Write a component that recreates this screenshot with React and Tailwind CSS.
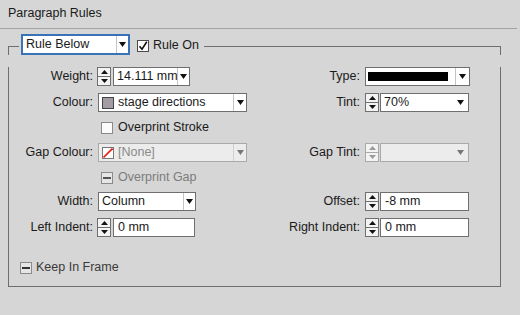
import React from "react";

const Tri = ({ up = false, c = "#111", w = 7, h = 4 }) => (
  <svg width={w} height={h} viewBox={`0 0 ${w} ${h}`} className="block">
    {up ? (
      <path d={`M0 ${h}L${w / 2} 0L${w} ${h}Z`} fill={c} />
    ) : (
      <path d={`M0 0L${w} 0L${w / 2} ${h}Z`} fill={c} />
    )}
  </svg>
);

function Spinner({ disabled = false }) {
  const b = disabled ? "border-[#a9a9a9]" : "border-[#6f6f6f]";
  const c = disabled ? "#9a9a9a" : "#111";
  return (
    <div className={`flex flex-col w-[14px] h-[19px] border ${b} bg-[#f3f3f3] shrink-0`}>
      <div className={`flex-1 flex items-center justify-center border-b ${b}`}>
        <Tri up c={c} w={7} h={4} />
      </div>
      <div className="flex-1 flex items-center justify-center">
        <Tri c={c} w={7} h={4} />
      </div>
    </div>
  );
}

function Combo({ w, children, divider = true, disabled = false, arrowW = 12 }) {
  const border = disabled ? "border-[#a9a9a9]" : "border-[#6f6f6f]";
  const bg = disabled ? "bg-[#ececec]" : "bg-white";
  return (
    <div className={`flex h-[19px] border ${border} ${bg} shrink-0`} style={{ width: w }}>
      <div className="flex-1 flex items-center overflow-hidden pl-[3px] whitespace-nowrap">{children}</div>
      <div
        className={`flex items-center justify-center shrink-0 ${divider ? (disabled ? "border-l border-[#cfcfcf]" : "border-l border-[#c4c4c4]") : ""}`}
        style={{ width: arrowW }}
      >
        <Tri c={disabled ? "#777" : "#111"} w={7} h={5} />
      </div>
    </div>
  );
}

function Field({ w, children }) {
  return (
    <div className="flex items-center h-[19px] border border-[#6f6f6f] bg-white pl-[4px] shrink-0 whitespace-nowrap" style={{ width: w }}>
      {children}
    </div>
  );
}

function Check({ state = "off", disabled = false }) {
  const border = state === "on" ? "border-[#4a4a4a]" : "border-[#8a8a8a]";
  const bg = state === "mixed" ? "bg-[#e6e6e6]" : "bg-[#fbfbfb]";
  return (
    <div className={`w-[12px] h-[12px] border ${border} ${bg} flex items-center justify-center shrink-0`}>
      {state === "on" && (
        <svg width="10" height="10" viewBox="0 0 10 10" className="block">
          <path d="M1.5 5.2L4 8.2L8.8 0.8" stroke="#111" strokeWidth="1.6" fill="none" />
        </svg>
      )}
      {state === "mixed" && <div className={`w-[8px] h-[2px] ${disabled ? "bg-[#555]" : "bg-[#333]"}`} />}
    </div>
  );
}

const LLabel = ({ children }) => (
  <div className="w-[88px] text-right pr-[4px] shrink-0 whitespace-nowrap">{children}</div>
);
const RLabel = ({ children }) => (
  <div className="w-[93px] text-right pr-[5px] shrink-0 whitespace-nowrap">{children}</div>
);

export default function App() {
  return (
    <div className="w-[520px] h-[315px] bg-[#d6d6d6] text-[#1a1a1a] text-[12.5px] leading-[15px] font-['Liberation_Sans',Arial,sans-serif] overflow-hidden">
      <div className="h-[28px] pl-[8px] pt-[6px]">Paragraph Rules</div>
      <div className="w-[517px] h-px bg-[#a2a2a2]" />

      <div className="ml-[8px] w-[493px] mt-[5px]">
        {/* legend row */}
        <div className="flex items-start h-[21px]">
          <div className="w-[11px] mt-[12px] h-[9px] border-t border-l border-[#6e6e6e]" />
          <div className="ml-[2px] w-[109px] h-[21px] border-2 border-[#3a72b8] bg-white flex">
            <div className="flex-1 flex items-center pl-[3px] whitespace-nowrap">Rule Below</div>
            <div className="w-[12px] flex items-center justify-center border-l border-[#c4c4c4]">
              <Tri w={7} h={5} />
            </div>
          </div>
          <div className="ml-[7px] mt-[6px]">
            <Check state="on" />
          </div>
          <div className="ml-[4px] h-[21px] flex items-center pt-[2px] whitespace-nowrap">Rule On</div>
          <div className="flex-1 ml-[5px] mt-[12px] h-[9px] border-t border-r border-[#6e6e6e]" />
        </div>

        {/* body */}
        <div className="border-l border-r border-b border-[#6e6e6e] pb-[9px]">
          {/* Weight / Type */}
          <div className="flex items-center h-[19px] mt-[12px]">
            <div className="flex items-center w-[263px] shrink-0">
              <LLabel>Weight:</LLabel>
              <Spinner />
              <div className="ml-[2px]">
                <Combo w={77}>14.111 mm</Combo>
              </div>
            </div>
            <RLabel>Type:</RLabel>
            <div className="flex h-[19px] w-[105px] border border-[#6f6f6f] bg-white">
              <div className="flex-1 flex items-center pl-[2px]">
                <div className="w-[80px] h-[9px] bg-black" />
              </div>
              <div className="w-[14px] flex items-center justify-center border-l border-[#c4c4c4]">
                <Tri w={7} h={5} />
              </div>
            </div>
          </div>

          {/* Colour / Tint */}
          <div className="flex items-center h-[19px] mt-[7px]">
            <div className="flex items-center w-[263px] shrink-0">
              <LLabel>Colour:</LLabel>
              <div className="ml-[1px]">
                <Combo w={149} arrowW={13}>
                  <div className="w-[12px] h-[12px] border border-[#444] bg-[#a39ca3] mr-[4px] shrink-0" />
                  stage directions
                </Combo>
              </div>
            </div>
            <RLabel>Tint:</RLabel>
            <Spinner />
            <div className="ml-[1px]">
              <Combo w={89} divider={false} arrowW={16}>70%</Combo>
            </div>
          </div>

          {/* Overprint Stroke */}
          <div className="flex items-center h-[19px] mt-[6px] pl-[92px]">
            <Check />
            <div className="ml-[5px] whitespace-nowrap">Overprint Stroke</div>
          </div>

          {/* Gap Colour / Gap Tint */}
          <div className="flex items-center h-[19px] mt-[6px]">
            <div className="flex items-center w-[263px] shrink-0">
              <LLabel>Gap Colour:</LLabel>
              <div className="ml-[1px]">
                <Combo w={149} disabled arrowW={13}>
                  <div className="w-[12px] h-[12px] border border-[#777] bg-white mr-[4px] shrink-0 flex">
                    <svg width="10" height="10" viewBox="0 0 10 10" className="block">
                      <path d="M0.5 9.5L9.5 0.5" stroke="#e8261c" strokeWidth="1.8" />
                    </svg>
                  </div>
                  <span className="text-[#8a8a8a]">[None]</span>
                </Combo>
              </div>
            </div>
            <RLabel>Gap Tint:</RLabel>
            <Spinner disabled />
            <div className="ml-[1px]">
              <Combo w={89} divider={false} disabled arrowW={16}>{""}</Combo>
            </div>
          </div>

          {/* Overprint Gap */}
          <div className="flex items-center h-[19px] mt-[6px] pl-[92px]">
            <Check state="mixed" disabled />
            <div className="ml-[5px] whitespace-nowrap text-[#7c7c7c]">Overprint Gap</div>
          </div>

          {/* Width / Offset */}
          <div className="flex items-center h-[19px] mt-[5px]">
            <div className="flex items-center w-[263px] shrink-0">
              <LLabel>Width:</LLabel>
              <div className="ml-[1px]">
                <Combo w={98} arrowW={12}>Column</Combo>
              </div>
            </div>
            <RLabel>Offset:</RLabel>
            <Spinner />
            <div className="ml-[1px]">
              <Field w={89}>-8 mm</Field>
            </div>
          </div>

          {/* Left Indent / Right Indent */}
          <div className="flex items-center h-[19px] mt-[7px]">
            <div className="flex items-center w-[263px] shrink-0">
              <LLabel>Left Indent:</LLabel>
              <Spinner />
              <div className="ml-[2px]">
                <Field w={82}>0 mm</Field>
              </div>
            </div>
            <RLabel>Right Indent:</RLabel>
            <Spinner />
            <div className="ml-[1px]">
              <Field w={89}>0 mm</Field>
            </div>
          </div>

          {/* Keep In Frame */}
          <div className="flex items-center h-[19px] mt-[21px] pl-[11px]">
            <Check state="mixed" />
            <div className="ml-[4px] whitespace-nowrap text-[#3a3a3a]">Keep In Frame</div>
          </div>
        </div>
      </div>
    </div>
  );
}
